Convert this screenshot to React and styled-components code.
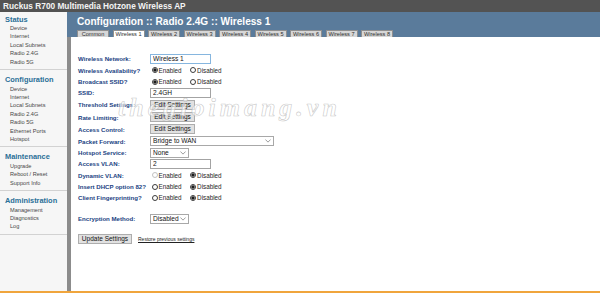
import React from 'react';
import styled, { createGlobalStyle } from 'styled-components';

const GlobalStyle = createGlobalStyle`
  html, body {
    margin: 0;
    padding: 0;
    background: #fff;
  }
  body {
    font-family: "Liberation Sans", Arial, sans-serif;
  }
`;

const navSections = [
  { title: 'Status', items: ['Device', 'Internet', 'Local Subnets', 'Radio 2.4G', 'Radio 5G'] },
  {
    title: 'Configuration',
    items: ['Device', 'Internet', 'Local Subnets', 'Radio 2.4G', 'Radio 5G', 'Ethernet Ports', 'Hotspot'],
  },
  { title: 'Maintenance', items: ['Upgrade', 'Reboot / Reset', 'Support Info'] },
  { title: 'Administration', items: ['Management', 'Diagnostics', 'Log'] },
];

const tabs = ['Common', 'Wireless 1', 'Wireless 2', 'Wireless 3', 'Wireless 4', 'Wireless 5', 'Wireless 6', 'Wireless 7', 'Wireless 8'];

const rows = [
  { label: 'Wireless Network:', kind: 'text', value: 'Wireless 1', focused: true, h: 11 },
  { label: 'Wireless Availability?', kind: 'radio', checked: 'en', h: 12 },
  { label: 'Broadcast SSID?', kind: 'radio', checked: 'en', h: 11 },
  { label: 'SSID:', kind: 'text', value: '2.4GH', h: 11 },
  { label: 'Threshold Settings:', kind: 'button', h: 13 },
  { label: 'Rate Limiting:', kind: 'button', h: 12 },
  { label: 'Access Control:', kind: 'button', h: 12 },
  { label: 'Packet Forward:', kind: 'select', value: 'Bridge to WAN', w: 124, h: 12 },
  { label: 'Hotspot Service:', kind: 'select', value: 'None', w: 39, h: 11 },
  { label: 'Access VLAN:', kind: 'text', value: '2', h: 11 },
  { label: 'Dynamic VLAN:', kind: 'radio', checked: 'dis', grayed: true, h: 12 },
  { label: 'Insert DHCP option 82?', kind: 'radio', checked: 'dis', h: 11 },
  { label: 'Client Fingerprinting?', kind: 'radio', checked: 'dis', h: 11 },
];

const App = () => {
  return (
    <Page>
      <GlobalStyle />
      <TopBar>Ruckus R700 Multimedia Hotzone Wireless AP</TopBar>
      <Body>
        <Sidebar>
          {navSections.map((section, i) => (
            <Section key={section.title} first={i === 0}>
              <SectionTitle>{section.title}</SectionTitle>
              {section.items.map((item) => (
                <NavItem key={item}>{item}</NavItem>
              ))}
            </Section>
          ))}
        </Sidebar>
        <Main>
          <Header>
            <Title>Configuration :: Radio 2.4G :: Wireless 1</Title>
            <Tabs>
              {tabs.map((tab) => (
                <Tab key={tab} active={tab === 'Wireless 1'}>
                  {tab}
                </Tab>
              ))}
            </Tabs>
          </Header>
          <Content>
            <Form>
              {rows.map((row) => (
                <FormRow key={row.label} label={row.label} row={row} />
              ))}
              <Spacer h={10} />
              <FormRow label="Encryption Method:" row={{ kind: 'select', value: 'Disabled', w: 39, h: 11 }} />
              <Spacer h={9} />
              <Actions>
                <Button w={54}>Update Settings</Button>
                <RestoreLink href="#">Restore previous settings</RestoreLink>
              </Actions>
            </Form>
            <Watermark>thegioimang.vn</Watermark>
          </Content>
        </Main>
      </Body>
      <Footer />
    </Page>
  );
};

const FormRow = ({ label, row }) => {
  return (
    <Row h={row.h}>
      <Label>{label}</Label>
      <Field>
        {row.kind === 'text' && (
          <TextInput type="text" readOnly defaultValue={row.value} focused={row.focused} />
        )}
        {row.kind === 'radio' && (
          <>
            <RadioOption>
              <Radio type="radio" readOnly checked={row.checked === 'en'} grayed={row.grayed} />
              Enabled
            </RadioOption>
            <RadioOption>
              <Radio type="radio" readOnly checked={row.checked === 'dis'} />
              Disabled
            </RadioOption>
          </>
        )}
        {row.kind === 'button' && <Button w={45}>Edit Settings</Button>}
        {row.kind === 'select' && (
          <SelectWrap w={row.w}>
            <Select defaultValue={row.value}>
              <option>{row.value}</option>
            </Select>
            <Chevron viewBox="0 0 8 5">
              <path d="M0.5 0.5 L4 4 L7.5 0.5" fill="none" stroke="#6b6b6b" strokeWidth="0.9" />
            </Chevron>
          </SelectWrap>
        )}
      </Field>
    </Row>
  );
};

const Page = styled.div`
  position: relative;
  width: 600px;
  height: 294px;
  display: flex;
  flex-direction: column;
  overflow: hidden;
`;

const TopBar = styled.div`
  height: 12px;
  padding-left: 3px;
  background: #535353;
  color: #f3f3f3;
  font-weight: bold;
  font-size: 8.3px;
  line-height: 12px;
  white-space: nowrap;
`;

const Body = styled.div`
  display: flex;
  flex: 1;
  min-height: 0;
`;

const Footer = styled.div`
  height: 3px;
  box-sizing: border-box;
  border-top: 2px solid #f0a53c;
  background: #fff;
`;

const Sidebar = styled.nav`
  width: 67px;
  flex-shrink: 0;
  background: #f6f6f6;
`;

const Section = styled.div`
  padding: ${(p) => (p.first ? '3.5px' : '6px')} 0 3px;
  border-bottom: 1px solid #d2d2d2;
`;

const SectionTitle = styled.div`
  padding-left: 5px;
  color: #2a6f97;
  font-weight: bold;
  font-size: 7.4px;
  line-height: 8.5px;
  white-space: nowrap;
`;

const NavItem = styled.div`
  padding-left: 10px;
  color: #474747;
  font-size: 5.6px;
  line-height: 8.4px;
  white-space: nowrap;
`;

const Main = styled.div`
  flex: 1;
  display: flex;
  flex-direction: column;
  min-width: 0;
`;

const Header = styled.div`
  height: 25px;
  padding-left: 10px;
  background: #5a7b9b;
  display: flex;
  flex-direction: column;
`;

const Title = styled.div`
  margin-top: 3px;
  color: #fff;
  font-weight: bold;
  font-size: 10.1px;
  line-height: 13px;
  white-space: nowrap;
`;

const Tabs = styled.div`
  margin-top: auto;
  display: flex;
  gap: 3.5px;
`;

const Tab = styled.div`
  width: 32px;
  height: 7px;
  box-sizing: border-box;
  border: 1px solid #8f8f8f;
  border-bottom: none;
  background: ${(p) => (p.active ? '#fff' : '#d7d7d7')};
  color: #2e2e2e;
  font-size: 5.6px;
  line-height: 6px;
  text-align: center;
  white-space: nowrap;
`;

const Content = styled.div`
  position: relative;
  flex: 1;
  border-left: 4px solid #8c8c8c;
  padding: 16px 0 0 7px;
`;

const Form = styled.div`
  display: flex;
  flex-direction: column;
`;

const Row = styled.div`
  display: flex;
  align-items: center;
  height: ${(p) => p.h}px;
`;

const Label = styled.div`
  width: 72px;
  flex-shrink: 0;
  color: #213f82;
  font-weight: bold;
  font-size: 6.1px;
  white-space: nowrap;
`;

const Field = styled.div`
  display: flex;
  align-items: center;
  gap: 7px;
`;

const TextInput = styled.input`
  width: 61px;
  height: 10px;
  box-sizing: border-box;
  margin: 0;
  padding: 0 2px;
  border: 1px solid ${(p) => (p.focused ? '#86b6df' : '#a3a3a3')};
  outline: none;
  font-family: "Liberation Sans", Arial, sans-serif;
  font-size: 6.6px;
  color: #111;
  background: #fff;
`;

const RadioOption = styled.label`
  display: flex;
  align-items: center;
  gap: 1px;
  color: #262626;
  font-size: 6.3px;
  white-space: nowrap;
`;

const Radio = styled.input`
  appearance: none;
  width: 6px;
  height: 6px;
  box-sizing: border-box;
  margin: 0 0 0 1.5px;
  border: 0.8px solid ${(p) => (p.grayed ? '#c2c2c2' : '#3c3c3c')};
  border-radius: 50%;
  background: #fff;

  &:checked {
    background: radial-gradient(circle, #1c1c1c 0 1.5px, #fff 1.7px);
  }
`;

const Button = styled.button`
  width: ${(p) => p.w}px;
  height: 10px;
  box-sizing: border-box;
  margin: 0;
  padding: 0;
  border: 1px solid #adadad;
  background: #e1e1e1;
  color: #111;
  font-family: "Liberation Sans", Arial, sans-serif;
  font-size: 6.5px;
  line-height: 8px;
  white-space: nowrap;
`;

const SelectWrap = styled.div`
  position: relative;
  width: ${(p) => p.w}px;
  height: 10px;
`;

const Select = styled.select`
  display: block;
  appearance: none;
  width: 100%;
  height: 10px;
  box-sizing: border-box;
  margin: 0;
  padding: 0 0 0 2px;
  border: 1px solid #a8a8a8;
  border-radius: 0;
  background: #fff;
  color: #111;
  font-family: "Liberation Sans", Arial, sans-serif;
  font-size: 6.6px;
  line-height: 8px;
`;

const Chevron = styled.svg`
  position: absolute;
  right: 3px;
  top: 3px;
  width: 6px;
  height: 4px;
  pointer-events: none;
`;

const Spacer = styled.div`
  height: ${(p) => p.h}px;
`;

const Actions = styled.div`
  display: flex;
  align-items: center;
  gap: 6px;
  height: 12px;
`;

const RestoreLink = styled.a`
  color: #222;
  font-size: 5px;
  text-decoration: underline;
  white-space: nowrap;
`;

const Watermark = styled.div`
  position: absolute;
  left: 47px;
  top: 58px;
  font-family: "Liberation Serif", "Times New Roman", serif;
  font-style: italic;
  font-weight: bold;
  font-size: 26px;
  line-height: 26px;
  letter-spacing: 4px;
  color: rgba(255, 255, 255, 0.6);
  -webkit-text-stroke: 0.6px rgba(175, 175, 175, 0.7);
  pointer-events: none;
  white-space: nowrap;
`;

export default App;
